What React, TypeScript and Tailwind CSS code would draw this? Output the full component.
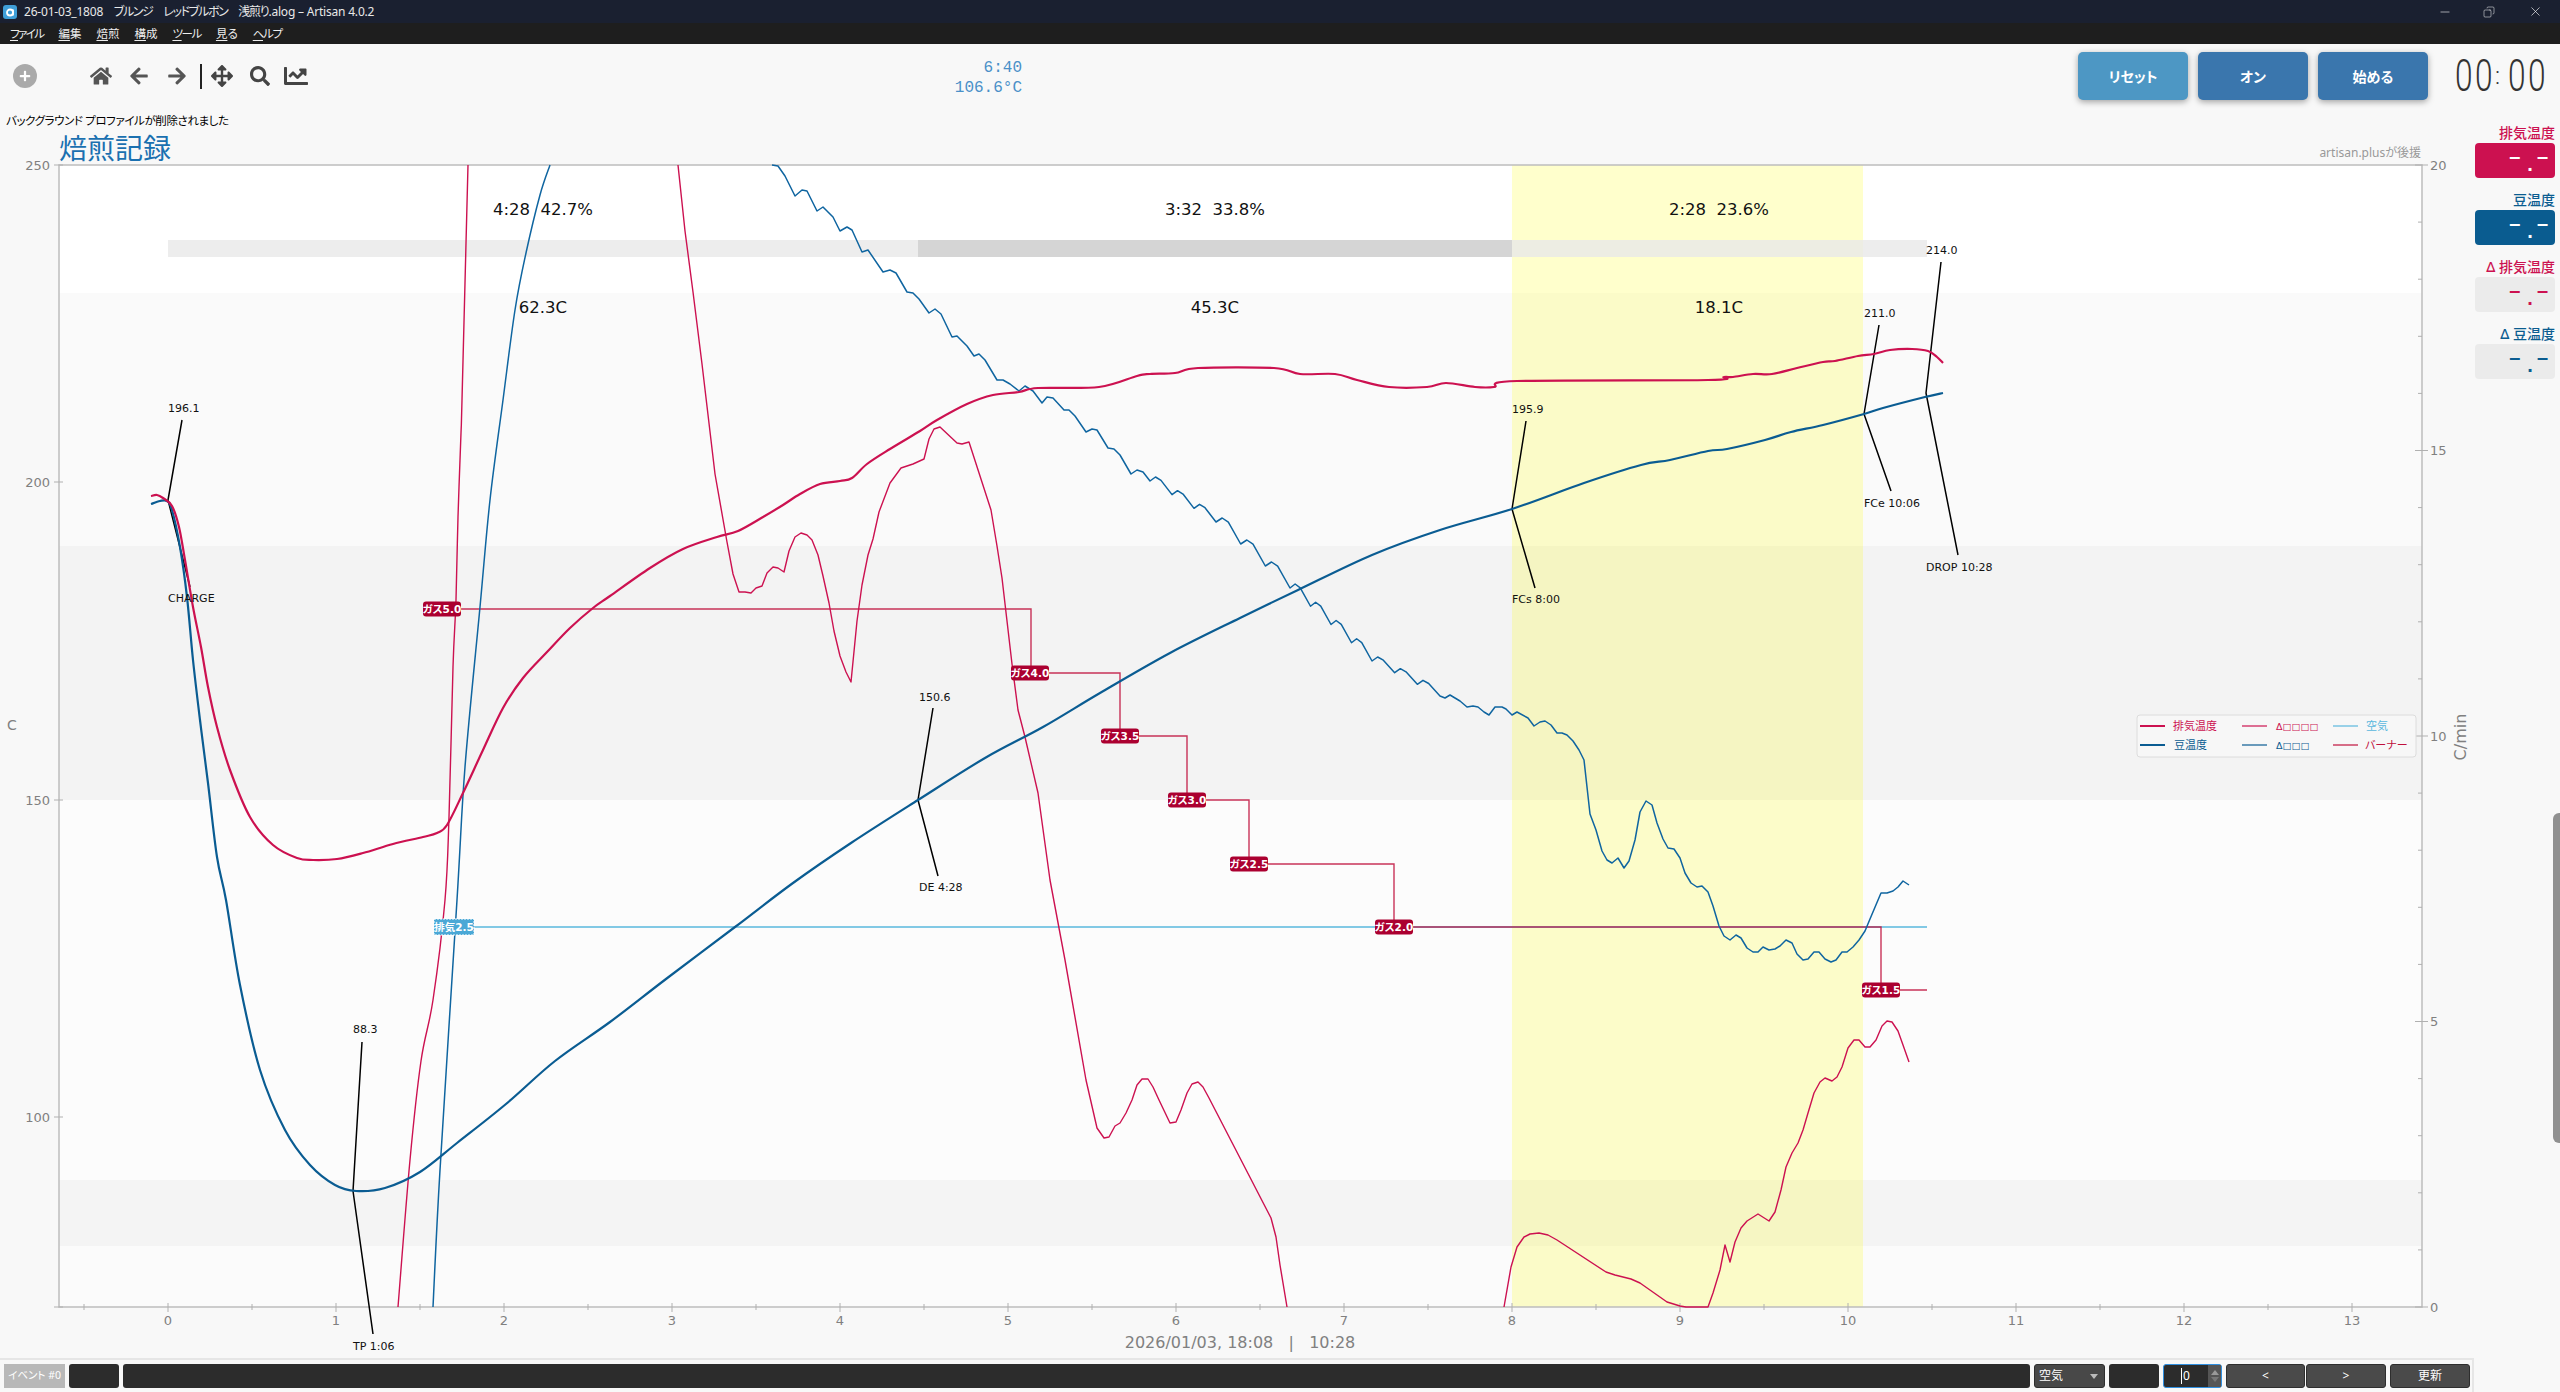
import { FaHome, FaArrowLeft, FaArrowRight, FaArrowsAlt, FaSearch, FaChartLine, FaPlus } from "react-icons/fa";
import { Minus, Copy, X } from "lucide-react";

type Pt = [number, number];

const RED = "#cc1150";
const BLUE = "#0a5c92";
const THIN_BLUE = "#0f65a0";
const BURNER = "#c0103c";
const AIR = "#5ab8de";

// x = 168 + 168 * minutes, y = 165 + (250 - temp) * 6.344
const et: Pt[] = [
  [151, 496], [157, 495], [163, 498], [172, 506], [179, 527], [185, 560], [193, 607], [201, 647], [208, 687], [217, 727],
  [230, 770], [250, 817], [273, 845], [297, 858], [313, 860], [337, 859], [363, 853], [393, 844], [423, 837], [437, 833],
  [447, 825], [463, 793], [483, 750], [503, 708], [523, 678], [547, 652], [570, 628], [593, 608], [610, 596], [650, 568],
  [683, 549], [717, 537], [738, 531], [763, 517], [783, 505], [800, 494], [820, 484], [840, 481], [852, 478], [867, 464],
  [890, 449], [920, 431], [937, 420], [967, 404], [993, 395], [1019, 392], [1038, 388], [1099, 387], [1137, 376], [1150, 374],
  [1175, 373], [1198, 368], [1274, 368], [1300, 374], [1335, 374], [1357, 380], [1389, 387], [1427, 387], [1446, 383],
  [1475, 387], [1494, 387], [1517, 381], [1708, 380], [1724, 377], [1733, 377], [1753, 374], [1772, 374], [1797, 368],
  [1823, 362], [1835, 361], [1858, 356], [1874, 354], [1890, 350], [1912, 349], [1928, 351], [1937, 357], [1943, 363],
];

const bt: Pt[] = [
  [151, 504], [160, 501], [167, 501], [172, 510], [180, 547], [187, 597], [193, 660], [200, 720], [208, 783], [217, 857],
  [226, 900], [240, 985], [260, 1070], [285, 1130], [310, 1165], [335, 1185], [356, 1191], [385, 1188], [420, 1172],
  [457, 1143], [506, 1104], [555, 1061], [610, 1022], [666, 979], [735, 927], [793, 883], [851, 843], [918, 800], [985, 758],
  [1043, 727], [1100, 693], [1170, 653], [1240, 618], [1298, 590], [1372, 555], [1440, 530], [1512, 509], [1584, 483],
  [1641, 465], [1670, 460], [1708, 451], [1727, 449], [1765, 440], [1791, 432], [1823, 425], [1864, 414], [1883, 408],
  [1925, 397], [1943, 393],
];

// repeating ripple of the rate of rise between two points
function saw(x0: number, y0: number, x1: number, y1: number, n: number): Pt[] {
  const out: Pt[] = [];
  const dx = (x1 - x0) / n;
  const dy = (y1 - y0) / n;
  for (let i = 0; i < n; i++) {
    const x = x0 + dx * i;
    const y = y0 + dy * i;
    out.push([x, y], [x + dx * 0.25, y - 4], [x + dx * 0.5, y - 2 + dy * 0.1]);
  }
  return out;
}

const dbtUp: Pt[] = [
  [433, 1307], [440, 1170], [457, 900], [465, 767], [480, 607], [490, 500], [503, 400], [515, 310], [526, 253], [540, 195], [550, 165],
];

const dbtDown: Pt[] = [
  [772, 165], [778, 166], [785, 176], [795, 196], [802, 190], [807, 191], [817, 211], [823, 207], [833, 217], [840, 231],
  [847, 227], [852, 230], [862, 252], [868, 250], [883, 272], [890, 270], [896, 273], [907, 292], [913, 293], [919, 299],
  [929, 313], [935, 309], [941, 314], [952, 337], [957, 336], [967, 346], [974, 356], [979, 354], [985, 360], [997, 380],
  [1003, 380], [1010, 384], [1019, 391], [1025, 386], [1033, 391], [1042, 403], [1047, 397], [1053, 398], [1064, 410],
  [1069, 410], [1075, 416], [1086, 432], [1092, 429], [1097, 430], [1108, 448], [1114, 449], [1120, 455], [1131, 474],
  [1137, 470], [1143, 472],
  ...saw(1150, 481, 1216, 522, 3),
  ...saw(1216, 522, 1290, 588, 3),
  ...saw(1290, 588, 1372, 661, 4),
  ...saw(1372, 661, 1440, 696, 3),
  [1440, 696], [1445, 698], [1450, 695], [1460, 701], [1467, 707], [1473, 706], [1478, 707], [1484, 712], [1489, 715],
  [1495, 707], [1502, 707], [1506, 709], [1512, 715], [1517, 712], [1528, 718], [1534, 726], [1540, 722], [1545, 721],
  [1551, 725], [1557, 733], [1562, 733], [1567, 735], [1573, 741], [1579, 750], [1584, 760], [1590, 814], [1596, 830],
  [1602, 851], [1607, 860], [1612, 863], [1618, 858], [1624, 868], [1629, 861], [1635, 840], [1640, 812], [1646, 801],
  [1652, 805], [1657, 823], [1663, 839], [1668, 848], [1674, 849], [1680, 858], [1685, 873], [1691, 883], [1697, 887],
  [1702, 886], [1708, 892], [1713, 906], [1719, 926], [1724, 936], [1730, 940], [1736, 935], [1741, 938], [1747, 948],
  [1753, 952], [1758, 952], [1763, 947], [1769, 950], [1775, 949], [1780, 946], [1786, 940], [1792, 943], [1797, 954],
  [1803, 960], [1808, 959], [1814, 952], [1819, 952], [1825, 959], [1831, 962], [1836, 960], [1842, 952], [1847, 952],
  [1853, 947], [1859, 940], [1865, 931], [1870, 919], [1881, 893], [1887, 893], [1893, 891], [1898, 887], [1903, 881], [1909, 885],
];

const detUp: Pt[] = [
  [398, 1307], [410, 1160], [421, 1061], [433, 1000], [445, 900], [449, 817], [453, 667], [456, 600], [458, 517], [461, 433], [462, 400], [468, 165],
];

const detDown: Pt[] = [
  [678, 165], [685, 231], [693, 292], [702, 364], [715, 474], [727, 542], [733, 574], [739, 592], [745, 592], [751, 593],
  [756, 588], [762, 586], [767, 573], [773, 567], [778, 568], [784, 572], [789, 551], [795, 537], [801, 533], [807, 535],
  [812, 540], [818, 555], [823, 576], [829, 603], [834, 631], [840, 656], [846, 672], [851, 682], [857, 621], [862, 585],
  [868, 555], [873, 539], [879, 512], [890, 483], [901, 468], [913, 464], [924, 459], [929, 439], [934, 429], [940, 427],
  [957, 443], [962, 444], [969, 442], [991, 510], [997, 546], [1002, 578], [1007, 621], [1012, 664], [1018, 710], [1025, 737],
  [1038, 793], [1050, 880], [1065, 960], [1086, 1080], [1097, 1128], [1104, 1138], [1109, 1137], [1115, 1126], [1120, 1123],
  [1126, 1113], [1132, 1100], [1137, 1085], [1142, 1079], [1148, 1079], [1153, 1087], [1159, 1100], [1170, 1123], [1176, 1122],
  [1181, 1110], [1187, 1093], [1192, 1084], [1198, 1082], [1203, 1087], [1209, 1098], [1271, 1218], [1276, 1237], [1280, 1265], [1287, 1307],
];

const detEnd: Pt[] = [
  [1504, 1307], [1511, 1267], [1517, 1247], [1524, 1237], [1530, 1234], [1539, 1233], [1548, 1235], [1557, 1240], [1606, 1272],
  [1615, 1275], [1631, 1279], [1640, 1283], [1667, 1302], [1680, 1306], [1686, 1307], [1708, 1307], [1713, 1293], [1720, 1270],
  [1725, 1245], [1730, 1262], [1735, 1242], [1741, 1228], [1747, 1221], [1758, 1214], [1769, 1221], [1775, 1212], [1781, 1190],
  [1786, 1167], [1792, 1153], [1798, 1143], [1803, 1130], [1808, 1113], [1814, 1093], [1820, 1082], [1825, 1078], [1832, 1081],
  [1837, 1077], [1842, 1067], [1848, 1048], [1854, 1040], [1859, 1040], [1865, 1047], [1870, 1047], [1876, 1040], [1882, 1026],
  [1887, 1021], [1892, 1022], [1898, 1031], [1903, 1045], [1909, 1062],
];

const burnerSteps: Pt[] = [
  [442, 609], [1031, 609], [1031, 673], [1120, 673], [1120, 736], [1187, 736], [1187, 800], [1249, 800], [1249, 864],
  [1394, 864], [1394, 927], [1881, 927], [1881, 990], [1927, 990],
];

const gasPills = [
  { label: "ガス5.0", x: 442, y: 609 },
  { label: "ガス4.0", x: 1030, y: 673 },
  { label: "ガス3.5", x: 1120, y: 736 },
  { label: "ガス3.0", x: 1187, y: 800 },
  { label: "ガス2.5", x: 1249, y: 864 },
  { label: "ガス2.0", x: 1394, y: 927 },
  { label: "ガス1.5", x: 1881, y: 990 },
];

const annotations = [
  { top: "196.1", bottom: "CHARGE", x: 168, topY: 408, botY: 598, line: [[182, 420], [168, 500], [190, 587]] },
  { top: "88.3", bottom: "TP 1:06", x: 353, topY: 1029, botY: 1346, line: [[362, 1042], [353, 1191], [373, 1334]] },
  { top: "150.6", bottom: "DE 4:28", x: 919, topY: 697, botY: 887, line: [[933, 708], [918, 800], [938, 876]] },
  { top: "195.9", bottom: "FCs 8:00", x: 1512, topY: 409, botY: 599, line: [[1526, 421], [1512, 509], [1535, 588]] },
  { top: "211.0", bottom: "FCe 10:06", x: 1864, topY: 313, botY: 503, line: [[1879, 325], [1864, 414], [1891, 491]] },
  { top: "214.0", bottom: "DROP 10:28", x: 1926, topY: 250, botY: 567, line: [[1941, 262], [1926, 393], [1958, 555]] },
];

const phases = [
  { x: 543, time: "4:28  42.7%", rise: "62.3C" },
  { x: 1215, time: "3:32  33.8%", rise: "45.3C" },
  { x: 1719, time: "2:28  23.6%", rise: "18.1C" },
];

const legend = [
  { x: 2140, y: 726, w: 2, color: RED, text: "排気温度", tx: 2173 },
  { x: 2140, y: 745, w: 2, color: BLUE, text: "豆温度", tx: 2174 },
  { x: 2242, y: 726, w: 1.2, color: RED, text: "Δ□□□□", tx: 2276, small: true },
  { x: 2242, y: 745, w: 1.2, color: BLUE, text: "Δ□□□", tx: 2276, small: true },
  { x: 2333, y: 726, w: 1.2, color: AIR, text: "空気", tx: 2366 },
  { x: 2333, y: 745, w: 1.2, color: BURNER, text: "バーナー", tx: 2365 },
];

const pts = (p: number[][]) => p.map((q) => q.join(",")).join(" ");

// catmull-rom through the sampled points, so the thick curves stay round
function smooth(p: Pt[]) {
  let d = `M${p[0][0]} ${p[0][1]}`;
  for (let i = 0; i < p.length - 1; i++) {
    const a = p[Math.max(i - 1, 0)];
    const b = p[i];
    const c = p[i + 1];
    const e = p[Math.min(i + 2, p.length - 1)];
    const c1x = b[0] + (c[0] - a[0]) / 6;
    const c1y = b[1] + (c[1] - a[1]) / 6;
    const c2x = c[0] - (e[0] - b[0]) / 6;
    const c2y = c[1] - (e[1] - b[1]) / 6;
    d += `C${c1x} ${c1y} ${c2x} ${c2y} ${c[0]} ${c[1]}`;
  }
  return d;
}

function Chart() {
  const minutes = Array.from({ length: 28 }, (_, i) => i - 1);
  const rightTicks = Array.from({ length: 21 }, (_, i) => i);
  return (
    <svg
      width={2470}
      height={1200}
      viewBox="0 158 2470 1200"
      className="relative block font-['DejaVu_Sans','Noto_Sans_CJK_JP',sans-serif]"
    >
      {/* temperature bands */}
      <rect x={59} y={165} width={2363} height={128} fill="#ffffff" />
      <rect x={59} y={293} width={2363} height={253} fill="#fafafa" />
      <rect x={59} y={546} width={2363} height={254} fill="#f3f3f3" />
      <rect x={59} y={800} width={2363} height={380} fill="#fcfcfc" />
      <rect x={59} y={1180} width={2363} height={66} fill="#f4f4f4" />
      <rect x={59} y={1246} width={2363} height={61} fill="#fbfbfb" />
      <rect x={1512} y={165} width={351} height={1142} fill="#ffff00" opacity={0.2} />

      {/* phase bar */}
      <rect x={168} y={240} width={750} height={17} fill="#e8e8e8" opacity={0.8} />
      <rect x={918} y={240} width={594} height={17} fill="#d5d5d5" />
      <rect x={1512} y={240} width={415} height={17} fill="#e8e8e8" opacity={0.8} />

      {phases.map((p) => (
        <g key={p.x} fontSize={16.5} fill="#111" textAnchor="middle">
          <text x={p.x} y={215} className="whitespace-pre">{p.time}</text>
          <text x={p.x} y={313}>{p.rise}</text>
        </g>
      ))}

      {/* axes */}
      <g stroke="#bdbdbd" strokeWidth={1.5} fill="none">
        <path d="M59 165H2422V1307H59Z" />
      </g>
      <g stroke="#b0b0b0" strokeWidth={1}>
        {minutes.map((m) => {
          const x = 168 + m * 84;
          const major = m % 2 === 0;
          return <line key={m} x1={x} x2={x} y1={major ? 1303 : 1304} y2={major ? 1312 : 1310} />;
        })}
        {rightTicks.map((v) => {
          const y = 1307 - v * 57.1;
          return <line key={v} x1={v % 5 === 0 ? 2415 : 2418} x2={v % 5 === 0 ? 2428 : 2422} y1={y} y2={y} />;
        })}
        {[165, 482, 800, 1117, 1307].map((y) => (
          <line key={y} x1={54} x2={63} y1={y} y2={y} />
        ))}
      </g>
      <g fontSize={13} fill="#808080">
        {[["250", 170], ["200", 487], ["150", 805], ["100", 1122]].map(([t, y]) => (
          <text key={t} x={50} y={y} textAnchor="end">{t}</text>
        ))}
        {[["20", 170], ["15", 455], ["10", 741], ["5", 1026], ["0", 1312]].map(([t, y]) => (
          <text key={t} x={2430} y={y}>{t}</text>
        ))}
        {minutes.filter((m) => m >= 0 && m % 2 === 0).map((m) => (
          <text key={m} x={168 + m * 84} y={1325} textAnchor="middle">{m / 2}</text>
        ))}
        <text x={7} y={730} fontSize={14}>C</text>
        <text x={2466} y={737} fontSize={16} textAnchor="middle" transform="rotate(-90 2466 737)">C/min</text>
        <text x={1240} y={1348} fontSize={16} textAnchor="middle" className="whitespace-pre">2026/01/03, 18:08   |   10:28</text>
      </g>

      {/* event steps */}
      <polyline points="454,927 1927,927" fill="none" stroke={AIR} strokeWidth={1.4} />
      <polyline points={pts(burnerSteps)} fill="none" stroke={BURNER} strokeWidth={1.4} opacity={0.85} />

      {/* curves */}
      <g fill="none" strokeLinejoin="round">
        <path d={smooth(detUp)} stroke={RED} strokeWidth={1.4} />
        <polyline points={pts(detDown)} stroke={RED} strokeWidth={1.4} />
        <polyline points={pts(detEnd)} stroke={RED} strokeWidth={1.4} />
        <path d={smooth(dbtUp)} stroke={THIN_BLUE} strokeWidth={1.5} />
        <polyline points={pts(dbtDown)} stroke={THIN_BLUE} strokeWidth={1.5} />
        {annotations.map((a) => (
          <polyline key={a.bottom} points={pts(a.line)} stroke="#000" strokeWidth={1.5} />
        ))}
        <path d={smooth(bt)} stroke={BLUE} strokeWidth={2.2} />
        <path d={smooth(et)} stroke={RED} strokeWidth={2.2} />
      </g>

      {annotations.map((a) => (
        <g key={a.bottom} fontSize={11} fill="#111">
          <text x={a.x} y={a.topY + 4}>{a.top}</text>
          <text x={a.x} y={a.botY + 4}>{a.bottom}</text>
        </g>
      ))}

      {/* event tags */}
      <g>
        <rect x={434} y={919} width={40} height={16} fill="#4aa8d6" stroke="#ffffff" strokeWidth={1} strokeDasharray="2 1" />
        <text x={454} y={931} fontSize={10.5} fontWeight={700} fill="#fff" textAnchor="middle">排気2.5</text>
      </g>
      {gasPills.map((p) => (
        <g key={p.label}>
          <rect x={p.x - 19} y={p.y - 7.5} width={38} height={15} rx={3} fill="#ab0030" />
          <text x={p.x} y={p.y + 4} fontSize={10.5} fontWeight={700} fill="#fff" textAnchor="middle">{p.label}</text>
        </g>
      ))}

      {/* legend */}
      <rect x={2137} y={715} width={279} height={42} rx={3} fill="#f7f7f7" fillOpacity={0.9} stroke="#dcdcdc" />
      {legend.map((l) => (
        <g key={l.text}>
          <line x1={l.x} x2={l.x + 25} y1={l.y} y2={l.y} stroke={l.color} strokeWidth={l.w} />
          <text x={l.tx} y={l.y + 4} fontSize={l.small ? 9.5 : 11} fill={l.color}>{l.text}</text>
        </g>
      ))}
    </svg>
  );
}

function Readout({ label, bg, color }: { label: string; bg: string; color: string }) {
  const labelColor = color === "#ffffff" ? bg : color;
  return (
    <div className="flex flex-col items-end">
      <div className="text-[14px] leading-[20px] font-medium" style={{ color: labelColor }}>{label}</div>
      <div
        className="flex h-[35px] w-[80px] items-end justify-end rounded-[4px] pr-[7px] pb-[2px] font-['Liberation_Sans',sans-serif] text-[20px] leading-[24px] font-bold"
        style={{ backgroundColor: bg, color }}
      >
        <span className="-translate-y-[8px]">–</span>
        <span className="ml-[7px]">.</span>
        <span className="ml-[4px] -translate-y-[8px]">–</span>
      </div>
    </div>
  );
}

function ToolButton({ label, tone }: { label: string; tone: string }) {
  return (
    <button className={`h-[48px] w-[110px] rounded-[5px] text-[14px] font-bold text-white shadow-[0_2px_6px_rgba(0,0,0,0.35)] ${tone}`}>
      {label}
    </button>
  );
}

function DarkButton({ label, className }: { label: string; className: string }) {
  return (
    <button className={`h-[24px] rounded-[3px] border border-[#2e2e2e] bg-[#4a4a4a] text-[12px] text-white ${className}`}>
      {label}
    </button>
  );
}

function Digit({ value }: { value: string }) {
  return <span className="w-[20px] origin-left scale-x-[0.72]">{value}</span>;
}

export default function App() {
  const menus = [
    { label: "ファイル", tone: "tracking-[-1.6px]" },
    { label: "編集", tone: "" },
    { label: "焙煎", tone: "" },
    { label: "構成", tone: "" },
    { label: "ツール", tone: "tracking-[-1.4px]" },
    { label: "見る", tone: "" },
    { label: "ヘルプ", tone: "tracking-[-1.4px]" },
  ];
  return (
    <div className="flex h-[1392px] w-[2560px] flex-col overflow-hidden bg-[#f8f8f8] font-['Noto_Sans','Noto_Sans_CJK_JP',sans-serif] [font-feature-settings:'palt']">
      {/* title bar */}
      <div className="flex h-[23px] items-center bg-[#1a2030] pl-[3px] text-[12px] text-[#e8e8e8]">
        <svg width="14" height="14" viewBox="0 0 14 14" className="mr-[7px]">
          <rect width="14" height="14" rx="3" fill="#3f9fd8" />
          <circle cx="7" cy="7.5" r="3" fill="none" stroke="#fff" strokeWidth="1.8" />
          <path d="M10 4.5v6" stroke="#fff" strokeWidth="1.8" />
        </svg>
        <span className="tracking-[-0.2px]">26-01-03_1808</span>
        <span className="tracking-[-1.3px]">　ブルンジ　レッドブルボン　浅煎り</span>
        <span className="tracking-[-0.2px]">.alog – Artisan 4.0.2</span>
        <div className="ml-auto flex items-center text-white">
          <Minus size={14} strokeWidth={1} className="mr-[31px]" />
          <Copy size={12} strokeWidth={1} className="mr-[33px] -scale-x-100" />
          <X size={15} strokeWidth={1} className="mr-[17px]" />
        </div>
      </div>

      {/* menu bar */}
      <div className="flex h-[21px] items-center gap-[15px] bg-[#1e1e1e] pl-[10px] text-[11.5px] text-[#eeeeee]">
        {menus.map((m) => (
          <span key={m.label} className={m.tone}>
            <span className="underline underline-offset-2">{m.label[0]}</span>
            {m.label.slice(1)}
          </span>
        ))}
      </div>

      {/* toolbar */}
      <div className="flex h-[64px] items-center">
        <div className="ml-[13px] flex h-[24px] w-[24px] items-center justify-center rounded-full bg-[#aaaaaa] text-white">
          <FaPlus size={12} />
        </div>
        <div className="ml-[53px] flex items-center text-[#555555]">
          <FaHome size={22} />
          <FaArrowLeft size={20} className="ml-[17px]" />
          <FaArrowRight size={20} className="ml-[18px]" />
          <div className="ml-[13px] h-[25px] w-[2px] bg-[#222222]" />
          <FaArrowsAlt size={22} className="ml-[9px] text-[#444444]" />
          <FaSearch size={20} className="ml-[17px] text-[#444444]" />
          <FaChartLine size={24} className="ml-[14px] text-[#444444]" />
        </div>
        <div className="mt-[3px] ml-[642px] w-[72px] text-right font-['Liberation_Mono',monospace] text-[16px] leading-[20px] text-[#4a90c8]">
          <div>6:40</div>
          <div>106.6°C</div>
        </div>
        <div className="ml-[1056px] flex gap-[10px]">
          <ToolButton label="リセット" tone="bg-[#4d97c4]" />
          <ToolButton label="オン" tone="bg-[#3a76ad]" />
          <ToolButton label="始める" tone="bg-[#3a76ad]" />
        </div>
        <div className="ml-[27px] flex items-center font-['Roboto',sans-serif] text-[44px] leading-[46px] font-light text-[#333333]">
          <Digit value="0" />
          <Digit value="0" />
          <span className="w-[13px] text-[24px] leading-[24px]">:</span>
          <Digit value="0" />
          <Digit value="0" />
        </div>
      </div>

      {/* chart and readouts */}
      <div className="relative flex flex-1">
        <div className="flex w-[2470px] flex-col">
          <div className="h-[22px] pt-[5px] pl-[6px] text-[11.5px] leading-[16px] tracking-[-0.4px] text-black">
            バックグラウンド プロファイルが削除されました
          </div>
          <div className="flex h-[28px] items-start justify-between pr-[49px] pl-[59px]">
            <span className="mt-[3px] text-[28px] leading-[30px] text-[#1a70b0]">焙煎記録</span>
            <span className="mt-[15px] text-[12px] leading-[16px] text-[#999999]">artisan.plusが後援</span>
          </div>
          <Chart />
        </div>
        <div className="flex flex-col gap-[12px] pt-[15px] pl-[5px]">
          <Readout label="排気温度" bg="#cc1150" color="#ffffff" />
          <Readout label="豆温度" bg="#0a5c90" color="#ffffff" />
          <Readout label="Δ 排気温度" bg="#ebebeb" color="#cc1150" />
          <Readout label="Δ 豆温度" bg="#ebebeb" color="#0a5c90" />
        </div>
        {/* scroll handle */}
        <div className="absolute top-[705px] right-0 h-[330px] w-[7px] rounded-l-[6px] bg-[#909090]" />
      </div>

      {/* event bar */}
      <div className="flex h-[34px] w-[2474px] items-start gap-[4px] border-t-2 border-r-2 border-[#e6e6e6] pt-[4px] pl-[4px] text-[12px] text-white">
        <div className="flex h-[24px] w-[61px] items-center justify-center bg-[#b8b8b8] text-[10.5px]">イベント #0</div>
        <div className="h-[24px] w-[50px] rounded-[3px] bg-[#2c2c2c]" />
        <div className="h-[24px] w-[1907px] rounded-[3px] bg-[#2c2c2c]" />
        <div className="flex h-[24px] w-[71px] items-center justify-between rounded-[3px] border border-[#2e2e2e] bg-[#484848] pr-[6px] pl-[4px]">
          <span>空気</span>
          <span className="h-0 w-0 border-x-[4px] border-t-[5px] border-x-transparent border-t-[#bbbbbb]" />
        </div>
        <div className="h-[24px] w-[50px] rounded-[3px] bg-[#2c2c2c]" />
        <div className="flex h-[24px] w-[59px] items-center rounded-[3px] border border-[#2f8fe0] bg-[#2c2c2c] pl-[17px]">
          <span className="border-l border-white pl-[1px] leading-[16px]">0</span>
          <span className="ml-auto flex h-full w-[13px] flex-col items-center justify-center gap-[2px] bg-[#555555]">
            <span className="h-0 w-0 border-x-[4px] border-b-[5px] border-x-transparent border-b-[#999999]" />
            <span className="h-0 w-0 border-x-[4px] border-t-[5px] border-x-transparent border-t-[#777777]" />
          </span>
        </div>
        <div className="flex gap-[1px]">
          <DarkButton label="<" className="w-[79px]" />
          <DarkButton label=">" className="w-[80px]" />
        </div>
        <DarkButton label="更新" className="w-[80px]" />
      </div>
    </div>
  );
}
